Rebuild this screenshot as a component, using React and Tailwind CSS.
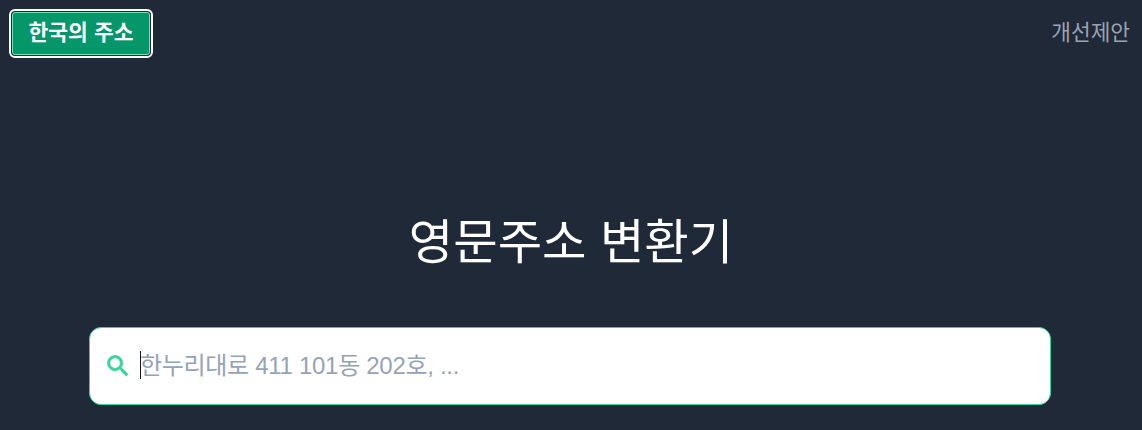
import React from 'react';

const fontStack = 'font-["Liberation_Sans","Noto_Sans_CJK_KR",sans-serif]';

const SearchIcon = () => (
  <svg viewBox="0 0 24 24" className="w-[28px] h-[28px] shrink-0" fill="#34d399" stroke="#34d399" strokeWidth="0.6">
    <path d="M15.5 14h-.79l-.28-.27C15.41 12.59 16 11.11 16 9.5 16 5.91 13.09 3 9.5 3S3 5.91 3 9.5 5.91 16 9.5 16c1.61 0 3.09-.59 4.23-1.57l.27.28v.79l5 4.99L20.49 19l-4.99-5zm-6 0C7.01 14 5 11.99 5 9.5S7.01 5 9.5 5 14 7.01 14 9.5 11.99 14 9.5 14z" />
  </svg>
);

const App = () => {
  return (
    <div className={`h-[430px] overflow-hidden bg-[#1f2937] ${fontStack}`}>
      <header className="flex items-start justify-between pl-3 pr-3 pt-3">
        <button className="h-[43px] w-[138px] rounded-[3px] border border-[#6ee7b7] bg-[#059669] text-[21.5px] font-bold text-white outline-2 outline-offset-[1px] outline-white">
          한국의 주소
        </button>
        <a className="mt-[7px] text-[21.4px] leading-7 text-[#9ca3af]">개선제안</a>
      </header>

      <main className="flex flex-col items-center">
        <h1 className="mt-[157px] text-[48.3px] leading-[60px] font-normal text-white">영문주소 변환기</h1>

        <div className="relative mr-[2px] mt-[55px] flex h-[78px] w-[962px] items-center gap-[8px] rounded-xl border border-[#34d399] bg-white pl-[14px]">
          <SearchIcon />
          <input
            className={`w-full bg-transparent text-2xl tracking-[-0.3px] outline-none placeholder:text-[#94a3b8] ${fontStack}`}
            placeholder="한누리대로 411 101동 202호, ..."
            readOnly
          />
          <span className="absolute left-[50px] top-[23px] h-[28px] w-px bg-[#111827]" />
        </div>
      </main>
    </div>
  );
};

export default App;
